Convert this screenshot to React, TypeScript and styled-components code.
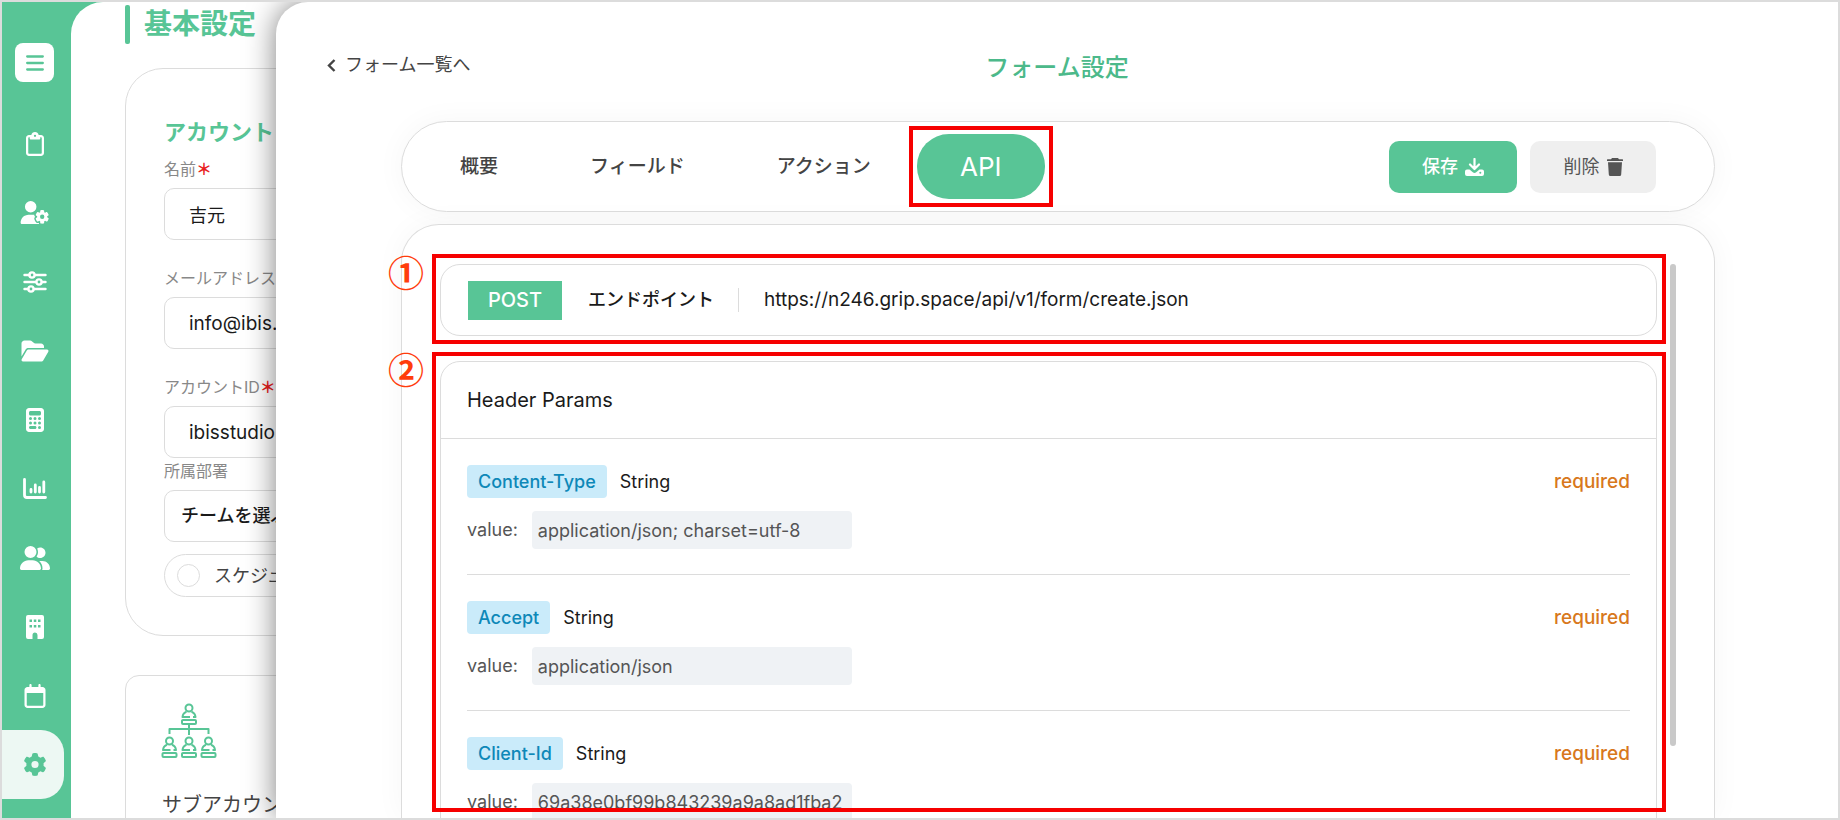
import React from "react";
import styled, { createGlobalStyle, css } from "styled-components";
import {
  FaRegClipboard,
  FaUserGear,
  FaFolderOpen,
  FaCalculator,
  FaUserGroup,
  FaRegCalendar,
  FaGear,
} from "react-icons/fa6";

const green = "#58c596";
const line = "#dcdcdc";

const GlobalStyle = createGlobalStyle`
  *, *::before, *::after { box-sizing: border-box; }
  body {
    margin: 0;
    color: #1a1a1a;
    font-family: Inter, "Noto Sans CJK JP", sans-serif;
    font-size: 18px;
    line-height: 24px;
  }
  button, input, select { font: inherit; color: inherit; }
  h1, h2, h3, p, ul, dl, dd { margin: 0; padding: 0; }
`;

const Frame = styled.div`
  position: relative;
  display: flex;
  height: 100vh;
  overflow: hidden;
  border: 2px solid ${line};
  background: ${green};
`;

const Sidebar = styled.nav`
  flex: none;
  width: 69px;
  padding-top: 41px;
  color: #fff;
`;

const MenuButton = styled.button`
  display: grid;
  place-items: center;
  width: 39px;
  height: 39px;
  margin: 0 0 27px 13px;
  padding: 0;
  border: 0;
  border-radius: 8px;
  background: #fff;
  color: ${green};
`;

const NavList = styled.ul`
  list-style: none;
`;

const NavLink = styled.a<{ $active?: boolean }>`
  display: flex;
  align-items: center;
  width: 62px;
  height: 69px;
  padding-left: 18px;
  color: #fff;
  svg { width: 30px; }
  ${(p) =>
    p.$active &&
    css`
      border-radius: 0 23px 23px 0;
      background: #edf8f3;
      color: ${green};
    `}
`;

const Page = styled.main`
  flex: 1;
  min-width: 0;
  overflow: hidden;
  padding: 3px 54px 0;
  border-top-left-radius: 32px;
  background: #fff;
`;

const PageTitle = styled.h1`
  display: flex;
  align-items: center;
  gap: 14px;
  height: 39px;
  margin-bottom: 24px;
  color: ${green};
  font-size: 28px;
  line-height: 39px;
  &::before {
    content: "";
    flex: none;
    width: 5px;
    height: 39px;
    border-radius: 2px;
    background: ${green};
  }
`;

const AccountCard = styled.section`
  margin-bottom: 39px;
  padding: 48px 38px 38px;
  border: 1px solid ${line};
  border-radius: 38px;
`;

const CardTitle = styled.h2`
  padding: 1px 0 6px;
  margin-bottom: 6px;
  color: ${green};
  font-size: 22px;
  line-height: 28px;
`;

const Field = styled.div<{ $gap: number }>`
  display: flex;
  flex-direction: column;
  margin-bottom: ${(p) => p.$gap}px;
`;

const FieldLabel = styled.label`
  height: 22px;
  margin-bottom: 8px;
  color: #888;
  font-size: 16px;
  line-height: 22px;
`;

const Star = styled.span`
  color: #e8201c;
  font-weight: 700;
`;

const TextInput = styled.input<{ $latin?: boolean }>`
  height: 52px;
  padding: 0 24px;
  border: 1px solid ${line};
  border-radius: 10px;
  background: #fff;
  font-size: ${(p) => (p.$latin ? 19 : 18)}px;
`;

const TeamSelect = styled.select`
  appearance: none;
  height: 52px;
  padding: 0 16px;
  border: 1px solid ${line};
  border-radius: 10px;
  background: #fff;
  font-weight: 500;
`;

const RadioRow = styled.label`
  display: flex;
  align-items: center;
  gap: 14px;
  height: 43px;
  padding-left: 12px;
  border: 1px solid ${line};
  border-radius: 22px;
  color: #444;
`;

const Radio = styled.input`
  appearance: none;
  width: 23px;
  height: 23px;
  margin: 0;
  border: 1px solid ${line};
  border-radius: 50%;
  background: #fff;
`;

const SubCard = styled.section`
  height: 300px;
  padding: 27px 35px;
  border: 1px solid ${line};
  border-radius: 14px;
`;

const SubTitle = styled.h2`
  margin-top: 26px;
  padding-left: 1px;
  color: #444;
  font-size: 20px;
  font-weight: 400;
  line-height: 28px;
`;

const Sheet = styled.section`
  position: absolute;
  inset: 0 0 0 274px;
  display: flex;
  flex-direction: column;
  padding: 0 123px 0 125px;
  border-top-left-radius: 32px;
  background: #fff;
  box-shadow: 0 0 30px rgba(0, 0, 0, 0.5);
`;

const SheetHeader = styled.header`
  display: grid;
  grid-template-columns: 1fr auto 1fr;
  align-items: start;
  height: 119px;
  margin-left: -74px;
  margin-right: -72px;
  padding-top: 51px;
`;

const BackLink = styled.a`
  display: flex;
  align-items: center;
  gap: 9px;
  color: #444;
  text-decoration: none;
`;

const SheetTitle = styled.h2`
  color: #4cb98a;
  font-size: 24px;
  font-weight: 500;
  line-height: 30px;
`;

const TabBar = styled.div`
  flex: none;
  display: flex;
  align-items: center;
  height: 91px;
  margin-bottom: 12px;
  padding: 0 58px 0 20px;
  border: 1px solid ${line};
  border-radius: 46px;
  background: #fff;
  box-shadow: 0 0 30px rgba(0, 0, 0, 0.04);
`;

const Tab = styled.button<{ $active?: boolean }>`
  flex: none;
  padding: 0 38px;
  margin-right: 16px;
  height: 65px;
  border: 0;
  border-radius: 32px;
  background: transparent;
  color: #444;
  font-size: 19px;
  font-weight: 500;
  ${(p) =>
    p.$active &&
    css`
      position: relative;
      width: 128px;
      margin: 0 auto 0 -8px;
      padding: 0;
      background: ${green};
      color: #fff;
      font-size: 26px;
      font-weight: 400;
    `}
`;

const TabMark = styled.span`
  position: absolute;
  inset: -8px;
  border: 4px solid #f60000;
`;

const ActionButton = styled.button<{ $primary?: boolean }>`
  display: flex;
  align-items: center;
  justify-content: center;
  gap: 7px;
  flex: none;
  width: ${(p) => (p.$primary ? 128 : 126)}px;
  height: 52px;
  margin-left: 13px;
  padding: 0;
  border: 0;
  border-radius: 10px;
  background: ${(p) => (p.$primary ? green : "#efefef")};
  color: ${(p) => (p.$primary ? "#fff" : "#555")};
  font-weight: ${(p) => (p.$primary ? 500 : 400)};
`;

const Panel = styled.div`
  flex: 1;
  min-height: 0;
  display: flex;
  gap: 13px;
  padding: 39px 38px 0;
  border: 1px solid ${line};
  border-bottom: 0;
  border-radius: 38px 38px 0 0;
  background: #fff;
  box-shadow: 0 0 30px rgba(0, 0, 0, 0.04);
`;

const PanelBody = styled.div`
  flex: 1;
  min-width: 0;
  display: flex;
  flex-direction: column;
`;

const ScrollThumb = styled.div`
  flex: none;
  width: 6px;
  height: 87%;
  border-radius: 3px;
  background: #c9c9c9;
`;

const Marked = styled.div<{ $fill?: boolean }>`
  position: relative;
  ${(p) => (p.$fill ? "flex: 1; min-height: 0;" : "flex: none; margin-bottom: 25px;")}
`;

const MarkBox = styled.div<{ $fill?: boolean }>`
  position: absolute;
  inset: ${(p) => (p.$fill ? "-9px -9px 6px -8px" : "-10px -9px -8px -8px")};
  border: 4px solid #f60000;
  pointer-events: none;
`;

const MarkNumber = styled.span`
  position: absolute;
  top: -11px;
  left: -52px;
  color: #ff3d0c;
  font-family: "Noto Sans CJK JP", sans-serif;
  font-size: 36px;
  font-weight: 700;
  line-height: 36px;
`;

const EndpointCard = styled.section`
  display: flex;
  align-items: center;
  height: 72px;
  padding-left: 27px;
  border: 1px solid ${line};
  border-radius: 20px;
`;

const Method = styled.span`
  width: 94px;
  height: 39px;
  margin-right: 26px;
  background: ${green};
  color: #fff;
  font-size: 20px;
  font-weight: 500;
  line-height: 39px;
  text-align: center;
`;

const EndpointLabel = styled.span`
  padding-right: 24px;
  border-right: 1px solid ${line};
  margin-right: 25px;
  font-weight: 500;
`;

const EndpointUrl = styled.span`
  font-size: 19px;
`;

const ParamsClip = styled.div`
  height: 100%;
  overflow: hidden;
`;

const ParamsCard = styled.section`
  min-height: 600px;
  border: 1px solid ${line};
  border-radius: 20px;
`;

const ParamsTitle = styled.h3`
  padding: 26px 26px 25px;
  border-bottom: 1px solid ${line};
  font-size: 20px;
  font-weight: 400;
  line-height: 25px;
`;

const Param = styled.div`
  margin: 0 26px;
  padding: 26px 0 25px;
  border-bottom: 1px solid ${line};
`;

const ParamHead = styled.div`
  display: flex;
  align-items: center;
  gap: 13px;
  height: 33px;
  margin-bottom: 13px;
`;

const ParamName = styled.span`
  padding: 0 11px;
  border-radius: 4px;
  background: #caebfa;
  color: #0e88b8;
  font-weight: 500;
  line-height: 33px;
`;

const Required = styled.span`
  margin-left: auto;
  color: #d8781c;
  font-size: 19px;
  font-weight: 500;
`;

const ParamValue = styled.label`
  display: flex;
  align-items: center;
  gap: 14px;
  color: #555;
`;

const ValueInput = styled.input`
  width: 320px;
  height: 38px;
  padding: 0 6px;
  border: 0;
  border-radius: 4px;
  background: #eff2f5;
`;

const IconMenu = () => (
  <svg width="18" height="16" viewBox="0 0 18 16" stroke="currentColor" strokeWidth="2.3" strokeLinecap="round">
    <path d="M1.200 1.500h15.600M1.200 8h15.600M1.200 14.500h15.600" />
  </svg>
);

const IconSliders = () => (
  <svg width="24" height="22" viewBox="0 0 24 22" fill="none" stroke="currentColor" strokeWidth="2.4" strokeLinecap="round">
    <path d="M1.5 4h5M12 4h10.500M1.500 11h11.500M19 11h3.500M1.500 18h3.500M11 18h11.500" />
    <circle cx="9" cy="4" r="2.600" />
    <circle cx="16" cy="11" r="2.600" />
    <circle cx="8" cy="18" r="2.600" />
  </svg>
);

const IconChart = () => (
  <svg width="24" height="22" viewBox="0 0 24 22" fill="none" stroke="currentColor" strokeWidth="2.800" strokeLinecap="round">
    <path d="M1.500 1.500v15.500a2.500 2.500 0 0 0 2.500 2.500h18.500" />
    <path d="M8 11.500v2.500M12.300 7v7M16.500 9.500v4.500M20.800 4v10" />
  </svg>
);

const IconBuilding = () => (
  <svg width="18" height="24" viewBox="0 0 18 24">
    <path
      fill="currentColor"
      fillRule="evenodd"
      d="M2 0h14a2 2 0 0 1 2 2v20a2 2 0 0 1-2 2h-4.500v-4a2.500 2.500 0 0 0-5 0v4H2a2 2 0 0 1-2-2V2a2 2 0 0 1 2-2zM3.500 4.500v2.500h2.500v-2.500zM7.800 4.500v2.500h2.500v-2.500zM12 4.500v2.500h2.500v-2.500zM3.500 10v2.500h2.500v-2.500zM7.800 10v2.500h2.500v-2.500zM12 10v2.500h2.500v-2.500z"
    />
  </svg>
);

const IconChevron = () => (
  <svg width="9" height="13" viewBox="0 0 9 13" fill="none" stroke="currentColor" strokeWidth="2.400">
    <path d="M7.500 1L2 6.500l5.500 5.500" />
  </svg>
);

const IconSave = () => (
  <svg width="19" height="18" viewBox="0 0 19 18">
    <path d="M9.500 1v9M5 6.500l4.500 4.500 4.500-4.500" fill="none" stroke="currentColor" strokeWidth="2.200" strokeLinecap="round" strokeLinejoin="round" />
    <path
      fill="currentColor"
      fillRule="evenodd"
      d="M2 11.500h2.500l3.300 2.700a2.700 2.700 0 0 0 3.400 0l3.300-2.700H17a2 2 0 0 1 2 2V16a2 2 0 0 1-2 2H2a2 2 0 0 1-2-2v-2.500a2 2 0 0 1 2-2zM15.300 13.800a1 1 0 1 0 0 2 1 1 0 0 0 0-2z"
    />
  </svg>
);

const IconTrash = () => (
  <svg width="16" height="18" viewBox="0 0 16 18" fill="currentColor">
    <path d="M5 0h6l1 1.200h3.500a.5.5 0 0 1 .5.500V3H0V1.700a.5.5 0 0 1 .5-.5H4zM1 4.300h14L14.200 16.500a1.600 1.600 0 0 1-1.600 1.500H3.400a1.600 1.600 0 0 1-1.600-1.500z" />
  </svg>
);

const Member = ({ x, y }: { x: number; y: number }) => (
  <g transform={`translate(${x} ${y})`}>
    <circle cx="7.500" cy="4.500" r="3.500" />
    <path d="M5 8.200c-2.500.8-3.700 2.600-4 5.300h7.500M10 8.200c2.500.8 3.700 2.600 4 5.300h-2.500M1.500 16.500h12a1 1 0 0 1 1 1v2a1 1 0 0 1-1 1h-12a1 1 0 0 1-1-1v-2a1 1 0 0 1 1-1z" />
  </g>
);

const IconOrg = () => (
  <svg width="56" height="56" viewBox="0 0 56 56" fill="none" stroke={green} strokeWidth="2" strokeLinejoin="round">
    <Member x={20.5} y={0.5} />
    <path d="M28 21v11M8.500 31v-5h39v5" />
    <Member x={1} y={33.5} />
    <Member x={20.5} y={33.5} />
    <Member x={40} y={33.5} />
  </svg>
);

const navItems = [
  { label: "フォーム", icon: <FaRegClipboard size={24} /> },
  { label: "ユーザー管理", icon: <FaUserGear size={23} /> },
  { label: "調整", icon: <IconSliders /> },
  { label: "フォルダ", icon: <FaFolderOpen size={24} /> },
  { label: "計算", icon: <FaCalculator size={24} /> },
  { label: "レポート", icon: <IconChart /> },
  { label: "チーム", icon: <FaUserGroup size={24} /> },
  { label: "会社", icon: <IconBuilding /> },
  { label: "カレンダー", icon: <FaRegCalendar size={24} /> },
  { label: "設定", icon: <FaGear size={23} />, active: true },
];

const params = [
  { name: "Content-Type", value: "application/json; charset=utf-8" },
  { name: "Accept", value: "application/json" },
  { name: "Client-Id", value: "69a38e0bf99b843239a9a8ad1fba2" },
];

export default function App() {
  return (
    <>
      <GlobalStyle />
      <Frame>
        <Sidebar>
          <MenuButton aria-label="メニュー">
            <IconMenu />
          </MenuButton>
          <NavList>
            {navItems.map((item) => (
              <li key={item.label}>
                <NavLink href="#" aria-label={item.label} $active={item.active}>
                  {item.icon}
                </NavLink>
              </li>
            ))}
          </NavList>
        </Sidebar>

        <Page>
          <PageTitle>基本設定</PageTitle>
          <AccountCard>
            <CardTitle>アカウント</CardTitle>
            <Field $gap={27}>
              <FieldLabel htmlFor="name">
                名前<Star>＊</Star>
              </FieldLabel>
              <TextInput id="name" defaultValue="吉元" />
            </Field>
            <Field $gap={27}>
              <FieldLabel htmlFor="mail">メールアドレス</FieldLabel>
              <TextInput id="mail" $latin defaultValue="info@ibis.jp" />
            </Field>
            <Field $gap={2}>
              <FieldLabel htmlFor="account">
                アカウントID<Star>＊</Star>
              </FieldLabel>
              <TextInput id="account" $latin defaultValue="ibisstudio" />
            </Field>
            <Field $gap={12}>
              <FieldLabel htmlFor="team">所属部署</FieldLabel>
              <TeamSelect id="team">
                <option>チームを選ぶ</option>
              </TeamSelect>
            </Field>
            <RadioRow>
              <Radio type="radio" name="schedule" />
              スケジュール
            </RadioRow>
          </AccountCard>
          <SubCard>
            <IconOrg />
            <SubTitle>サブアカウント</SubTitle>
          </SubCard>
        </Page>

        <Sheet>
          <SheetHeader>
            <BackLink href="#">
              <IconChevron />
              フォーム一覧へ
            </BackLink>
            <SheetTitle>フォーム設定</SheetTitle>
          </SheetHeader>

          <TabBar>
            <Tab>概要</Tab>
            <Tab>フィールド</Tab>
            <Tab>アクション</Tab>
            <Tab $active>
              API
              <TabMark />
            </Tab>
            <ActionButton $primary>
              保存
              <IconSave />
            </ActionButton>
            <ActionButton>
              削除
              <IconTrash />
            </ActionButton>
          </TabBar>

          <Panel>
            <PanelBody>
              <Marked>
                <EndpointCard>
                  <Method>POST</Method>
                  <EndpointLabel>エンドポイント</EndpointLabel>
                  <EndpointUrl>https://n246.grip.space/api/v1/form/create.json</EndpointUrl>
                </EndpointCard>
                <MarkBox />
                <MarkNumber>①</MarkNumber>
              </Marked>
              <Marked $fill>
                <ParamsClip>
                  <ParamsCard>
                    <ParamsTitle>Header Params</ParamsTitle>
                    {params.map((p) => (
                      <Param key={p.name}>
                        <ParamHead>
                          <ParamName>{p.name}</ParamName>
                          <span>String</span>
                          <Required>required</Required>
                        </ParamHead>
                        <ParamValue>
                          value:
                          <ValueInput readOnly value={p.value} />
                        </ParamValue>
                      </Param>
                    ))}
                  </ParamsCard>
                </ParamsClip>
                <MarkBox $fill />
                <MarkNumber>②</MarkNumber>
              </Marked>
            </PanelBody>
            <ScrollThumb />
          </Panel>
        </Sheet>
      </Frame>
    </>
  );
}
